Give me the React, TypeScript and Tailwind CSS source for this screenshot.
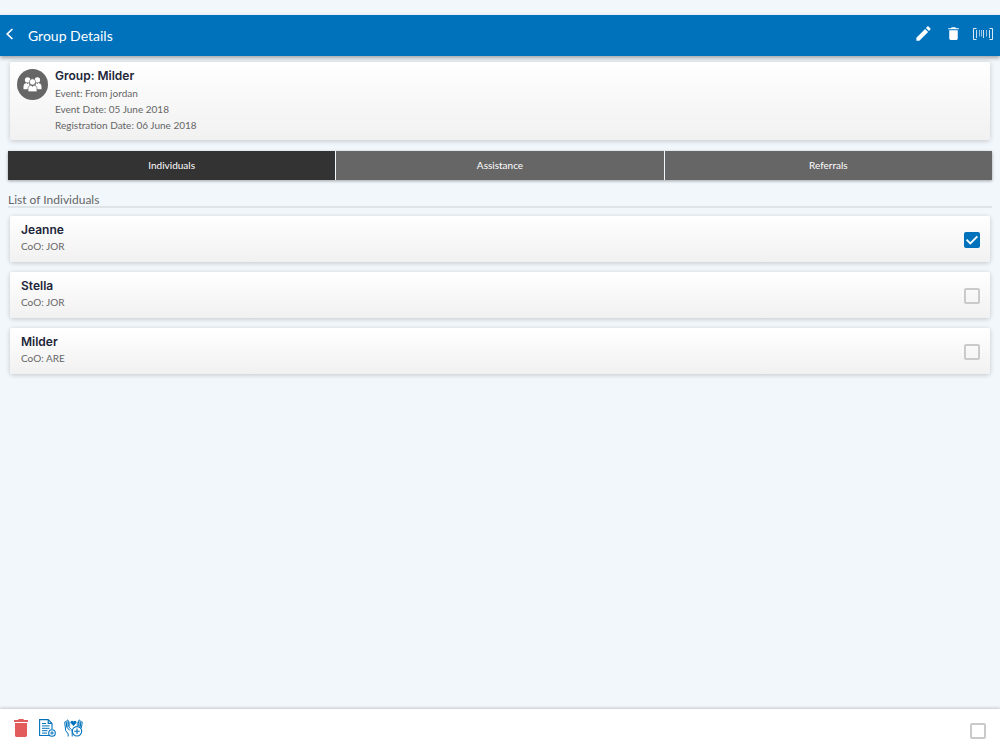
import { useState } from 'react';
import { IoMdCreate, IoMdTrash } from 'react-icons/io';

interface Individual {
  id: string;
  name: string;
  origin: string;
}

const individuals: Individual[] = [
  { id: 'jeanne', name: 'Jeanne', origin: 'JOR' },
  { id: 'stella', name: 'Stella', origin: 'JOR' },
  { id: 'milder', name: 'Milder', origin: 'ARE' },
];

const tabs = ['Individuals', 'Assistance', 'Referrals'];

function BackIcon() {
  return (
    <svg width="12" height="12" viewBox="0 0 12 12" fill="none" stroke="currentColor" aria-hidden="true">
      <path d="M8.4 1 3.2 6l5.2 5" strokeWidth="1.7" />
    </svg>
  );
}

function BarcodeIcon() {
  return (
    <svg width="20" height="14" viewBox="0 0 20 14" fill="none" stroke="currentColor" aria-hidden="true">
      <path d="M3.5 1.5h-3v11h3M16.5 1.5h3v11h-3" strokeOpacity=".85" />
      <path d="M3.5 3v8M10.5 3v8M16.5 3v8" strokeOpacity=".8" />
      <path d="M6.5 3v6.5M8.5 3v6.5M13.5 3v6.5" strokeOpacity=".6" />
    </svg>
  );
}

function GroupIcon() {
  return (
    <svg width="31" height="31" viewBox="0 0 31 31" className="shrink-0" aria-hidden="true">
      <circle cx="15.5" cy="15.5" r="15.5" fill="#666" />
      <g fill="#fff">
        <circle cx="10.6" cy="10.9" r="2.7" />
        <circle cx="20.4" cy="10.9" r="2.7" />
        <path d="M6.5 20.3v-2.8c0-2 1.2-3.2 3-3.5l1.1.9 1.2-.9 2 6.3zM24.5 20.3v-2.8c0-2-1.2-3.2-3-3.5l-1.1.9-1.2-.9-2 6.3z" />
        <g stroke="#666" strokeWidth=".7">
          <circle cx="15.5" cy="12.9" r="3.1" />
          <path d="M11 22.8v-3c0-2.2 1.2-3.3 3-3.7l1.5 1.3 1.5-1.3c1.8.4 3 1.5 3 3.7v3z" />
        </g>
      </g>
    </svg>
  );
}

function DeleteIcon() {
  return (
    <svg width="14" height="18" viewBox="0 0 14 18" fill="#e25c5c" aria-hidden="true">
      <path d="M0 1h4l.7-1h4.6l.7 1h4v2H0zM1 4h12v12.3c0 .9-.7 1.7-1.6 1.7H2.6C1.7 18 1 17.2 1 16.3z" />
    </svg>
  );
}

function AddDocumentIcon() {
  return (
    <svg width="17" height="18" viewBox="0 0 17 18" fill="none" stroke="currentColor" aria-hidden="true">
      <path d="M10 16.5H.6V.6h8.6L13 4.4V10M9.2.6v3.8H13" strokeWidth="1.1" />
      <path d="M3 4.5h4M3 6.9h7.6M3 9.3h7.6M3 11.7h5.5M3 14.1h5" strokeWidth="1" />
      <circle cx="13" cy="14" r="3.3" fill="#fff" strokeWidth="1.1" />
      <path d="M13 12.2v3.6M11.2 14h3.6" />
    </svg>
  );
}

function AddAssistanceIcon() {
  return (
    <svg width="19" height="18" viewBox="0 0 19 18" fill="none" stroke="currentColor" aria-hidden="true">
      <path
        d="M4.2 17.5V15L1.7 11.6.7 3.3c0-.9 1.2-.9 1.4 0l.8 4.9M2.9 8.2V1.7c0-.9 1.4-.9 1.4 0v5.8l2.9 2.9c1 1.1 1 2 1 3.6v3.5M2.9 8.2l2.9 3.3"
        strokeWidth="1"
      />
      <path d="M4.3 3.6c.2-.9 1.4-.8 1.4.1v4" strokeWidth=".8" />
      <path d="m17.3 9.2 1-5.9c0-.9-1.2-.9-1.4 0l-.8 4.5M16.1 7.8V1.7c0-.9-1.4-.9-1.4 0v5.5" strokeWidth="1" />
      <path d="M14.7 3.6c-.2-.9-1.4-.8-1.4.1V7" strokeWidth=".8" />
      <path d="M9.5 7 6.7 4.1C5.7 2.2 8.1.7 9.5 2.4c1.4-1.7 3.8-.2 2.8 1.7z" fill="currentColor" stroke="none" />
      <circle cx="13" cy="12.3" r="4.7" fill="#fff" strokeWidth="1.1" />
      <path d="M13 9.5v5.6M10.2 12.3h5.6" strokeWidth="1.1" />
    </svg>
  );
}

interface CheckboxProps {
  label: string;
  checked: boolean;
  onChange: () => void;
}

function Checkbox({ label, checked, onChange }: CheckboxProps) {
  return (
    <label className="grid shrink-0 pt-[3px]">
      <input
        type="checkbox"
        aria-label={label}
        checked={checked}
        onChange={onChange}
        className="peer col-start-1 row-start-1 size-4 appearance-none rounded-xs border-2 border-[#cacaca] checked:border-[#0072bc] checked:bg-[#0072bc]"
      />
      <svg
        viewBox="0 0 16 16"
        className="pointer-events-none invisible col-start-1 row-start-1 size-4 peer-checked:visible"
        fill="none"
        stroke="#fff"
        strokeWidth="1.8"
        aria-hidden="true"
      >
        <path d="M2.6 7.7 6.3 11.4 13.4 4.3" />
      </svg>
    </label>
  );
}

export default function App() {
  const [activeTab, setActiveTab] = useState('Individuals');
  const [selected, setSelected] = useState<string[]>(['jeanne']);
  const allSelected = selected.length === individuals.length;

  const toggle = (id: string) => {
    setSelected((prev) => (prev.includes(id) ? prev.filter((item) => item !== id) : [...prev, id]));
  };

  const toggleAll = () => {
    setSelected(allSelected ? [] : individuals.map((person) => person.id));
  };

  return (
    <div className="flex min-h-screen flex-col bg-[#f2f7fc] pt-[15px] font-['Lato',sans-serif] text-[10px] text-[#666]">
      <header className="flex h-[41px] items-center bg-[#0072bc] pr-[7px] pl-1 text-white shadow-[0_2px_4px_rgba(0,0,0,0.35)]">
        <button type="button" aria-label="Back" className="mb-1">
          <BackIcon />
        </button>
        <h1 className="ml-3 flex-1 text-[14px] leading-5">Group Details</h1>
        <div className="mb-1 flex items-center">
          <button type="button" aria-label="Edit group">
            <IoMdCreate size={19} />
          </button>
          <button type="button" aria-label="Delete group" className="ml-3">
            <IoMdTrash size={17} />
          </button>
          <button type="button" aria-label="Scan barcode" className="ml-[11px]">
            <BarcodeIcon />
          </button>
        </div>
      </header>

      <main className="flex-1 px-2 pt-[6px]">
        <section className="mx-[2px] flex rounded-xs bg-linear-to-b from-white to-[#f1f1f1] pt-[5px] pr-3 pb-[7px] pl-[7px] shadow-[0_1px_5px_rgba(0,0,0,0.2)]">
          <div className="mt-[2px] mr-[7px]">
            <GroupIcon />
          </div>
          <div className="leading-4">
            <h2 className="mb-px font-['Inter',sans-serif] text-[12px] leading-[17px] font-semibold text-[#22263a]">
              Group: Milder
            </h2>
            <p>Event: From jordan</p>
            <p>Event Date: 05 June 2018</p>
            <p>Registration Date: 06 June 2018</p>
          </div>
        </section>

        <div role="tablist" className="mt-[11px] grid grid-cols-3 gap-px shadow-[0_1px_3px_rgba(0,0,0,0.35)]">
          {tabs.map((tab) => (
            <button
              key={tab}
              type="button"
              role="tab"
              aria-selected={activeTab === tab}
              onClick={() => setActiveTab(tab)}
              className={`h-[29px] text-white ${activeTab === tab ? 'bg-[#333]' : 'bg-[#666]'}`}
            >
              {tab}
            </button>
          ))}
        </div>

        <h2 className="mt-[13px] border-b-2 border-[#dfe4e8] text-[12px] leading-[13px]">List of Individuals</h2>

        <ul className="mx-[2px] mt-2 flex flex-col gap-[10px]">
          {individuals.map((person) => (
            <li
              key={person.id}
              className="flex items-center justify-between rounded-xs bg-linear-to-b from-white to-[#f1f1f1] pt-[5px] pr-[10px] pb-[7px] pl-[11px] shadow-[0_1px_5px_rgba(0,0,0,0.2)]"
            >
              <div className="leading-[17px]">
                <h3 className="font-['Inter',sans-serif] text-[12px] font-semibold text-[#22263a]">{person.name}</h3>
                <p>CoO: {person.origin}</p>
              </div>
              <Checkbox
                label={`Select ${person.name}`}
                checked={selected.includes(person.id)}
                onChange={() => toggle(person.id)}
              />
            </li>
          ))}
        </ul>
      </main>

      <footer className="flex h-[41px] items-center bg-white px-[14px] text-[#0072bc] shadow-[0_-1px_3px_rgba(0,0,0,0.2)]">
        <div className="mb-1 flex flex-1 items-center">
          <button type="button" aria-label="Delete selected">
            <DeleteIcon />
          </button>
          <button type="button" aria-label="Add document" className="ml-[11px]">
            <AddDocumentIcon />
          </button>
          <button type="button" aria-label="Add assistance" className="ml-2">
            <AddAssistanceIcon />
          </button>
        </div>
        <Checkbox label="Select all" checked={allSelected} onChange={toggleAll} />
      </footer>
    </div>
  );
}
